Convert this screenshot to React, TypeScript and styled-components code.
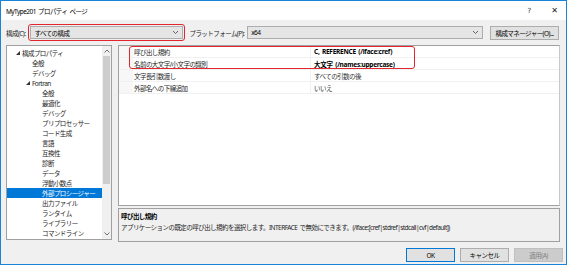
import styled, { createGlobalStyle } from "styled-components"

const GlobalStyle = createGlobalStyle`
    html, body {
        margin: 0;
        padding: 0;
        background: #f0f0f0;
    }
    * {
        box-sizing: border-box;
    }
`

const treeItems = [
    { label: "構成プロパティ", level: 0, open: true },
    { label: "全般", level: 1 },
    { label: "デバッグ", level: 1 },
    { label: "Fortran", level: 1, open: true },
    { label: "全般", level: 2 },
    { label: "最適化", level: 2 },
    { label: "デバッグ", level: 2 },
    { label: "プリプロセッサー", level: 2 },
    { label: "コード生成", level: 2 },
    { label: "言語", level: 2 },
    { label: "互換性", level: 2 },
    { label: "診断", level: 2 },
    { label: "データ", level: 2 },
    { label: "浮動小数点", level: 2 },
    { label: "外部プロシージャー", level: 2, selected: true },
    { label: "出力ファイル", level: 2 },
    { label: "ランタイム", level: 2 },
    { label: "ライブラリー", level: 2 },
    { label: "コマンドライン", level: 2 },
]

const props = [
    { name: "呼び出し規約", value: "C, REFERENCE (/iface:cref)", bold: true },
    { name: "名前の大文字/小文字の識別", value: "大文字 (/names:uppercase)", bold: true },
    { name: "文字長引数渡し", value: "すべての引数の後" },
    { name: "外部名への下線追加", value: "いいえ" },
]

const Chevron = () => (
    <svg width="7" height="5" viewBox="0 0 7 5">
        <polyline points="1,1 3.5,3.5 6,1" fill="none" stroke="#555" strokeWidth="0.9" />
    </svg>
)

const Expander = () => (
    <svg width="4" height="4" viewBox="0 0 4 4">
        <polygon points="4,0 4,4 0,4" fill="#333" />
    </svg>
)

const App = () => {

    return (

        <Window>

            <GlobalStyle />

            <TitleBar>

                <Title>MyType201 プロパティ ページ</Title>

                <TitleButtons>

                    <TitleGlyph>?</TitleGlyph>

                    <TitleGlyph $big>✕</TitleGlyph>

                </TitleButtons>

            </TitleBar>

            <Toolbar>

                <Label>構成(C):</Label>

                <Highlight>

                    <Select $width={153}>

                        <span>すべての構成</span>

                        <Chevron />

                    </Select>

                </Highlight>

                <Label $left={4}>プラットフォーム(P):</Label>

                <Select $width={236}>

                    <span>x64</span>

                    <Chevron />

                </Select>

                <Button $width={69}>構成マネージャー(O)...</Button>

            </Toolbar>

            <Main>

                <Tree>

                    <TreeList>

                        {treeItems.map((item, i) => (

                            <TreeRow key={i} $level={item.level} $selected={!!item.selected}>

                                <ExpanderSlot>{item.open && <Expander />}</ExpanderSlot>

                                {item.label}

                            </TreeRow>

                        ))}

                    </TreeList>

                    <ScrollBar>

                        <ScrollArrow>

                            <svg width="6" height="4" viewBox="0 0 6 4">
                                <polyline points="0.5,3.5 3,1 5.5,3.5" fill="none" stroke="#606060" strokeWidth="0.9" />
                            </svg>

                        </ScrollArrow>

                        <ScrollTrack>

                            <Thumb />

                        </ScrollTrack>

                        <ScrollArrow>

                            <svg width="6" height="4" viewBox="0 0 6 4">
                                <polyline points="0.5,0.5 3,3 5.5,0.5" fill="none" stroke="#606060" strokeWidth="0.9" />
                            </svg>

                        </ScrollArrow>

                    </ScrollBar>

                </Tree>

                <RightColumn>

                    <Grid>

                        {props.map((p, i) => (

                            <GridRow key={i}>

                                <Gutter />

                                <NameCell>{p.name}</NameCell>

                                <ValueCell $bold={!!p.bold}>{p.value}</ValueCell>

                            </GridRow>

                        ))}

                        <RowHighlight />

                    </Grid>

                    <Description>

                        <DescTitle>呼び出し規約</DescTitle>

                        <DescText>アプリケーションの既定の呼び出し規約を選択します。INTERFACE で無効にできます。(/iface:[cref|stdref|stdcall|cvf|default])</DescText>

                    </Description>

                </RightColumn>

            </Main>

            <Footer>

                <Button $width={49} $default>OK</Button>

                <Button $width={49}>キャンセル</Button>

                <Button $width={49} $disabled>適用(A)</Button>

            </Footer>

        </Window>

    )

}

const Window = styled.div`
    width: 567px;
    height: 265px;
    border: 1px solid #1883d7;
    background: #f0f0f0;
    display: flex;
    flex-direction: column;
    font-family: "Noto Sans", "Noto Sans CJK JP", sans-serif;
    font-size: 6.5px;
    letter-spacing: -0.55px;
    word-spacing: 1px;
    color: #000;
    overflow: hidden;
`

const TitleBar = styled.div`
    height: 19px;
    background: #fff;
    display: flex;
    align-items: center;
    justify-content: space-between;
    padding: 0 8px 0 5px;
`

const Title = styled.div`
    font-size: 6.5px;
`

const TitleButtons = styled.div`
    display: flex;
    align-items: center;
    gap: 20px;
`

const TitleGlyph = styled.span<{ $big?: boolean }>`
    font-family: "DejaVu Sans", sans-serif;
    font-size: ${p => (p.$big ? "8px" : "7px")};
    letter-spacing: 0;
    color: #222;
`

const Toolbar = styled.div`
    height: 17px;
    margin-top: 4px;
    display: flex;
    align-items: center;
    padding: 0 7px 0 5px;
`

const Label = styled.span<{ $left?: number }>`
    margin-left: ${p => p.$left || 0}px;
    margin-right: 3px;
    white-space: nowrap;
    color: #222;
`

const Highlight = styled.div`
    border: 1.5px solid #e2262d;
    border-radius: 3px;
    padding: 1px;
`

const Select = styled.div<{ $width: number }>`
    width: ${p => p.$width}px;
    height: 13px;
    background: #e5e5e5;
    border: 1px solid #adadad;
    display: flex;
    align-items: center;
    justify-content: space-between;
    padding: 0 3px 0 3px;
`

const Button = styled.div<{ $width: number; $default?: boolean; $disabled?: boolean }>`
    width: ${p => p.$width}px;
    height: 14px;
    margin-left: auto;
    background: ${p => (p.$disabled ? "#cccccc" : "#e1e1e1")};
    border: 1px solid ${p => (p.$default ? "#0078d7" : p.$disabled ? "#bfbfbf" : "#adadad")};
    color: ${p => (p.$disabled ? "#838383" : "#000")};
    display: flex;
    align-items: center;
    justify-content: center;
    white-space: nowrap;
`

const Main = styled.div`
    display: flex;
    gap: 6px;
    margin-top: 4px;
    padding: 0 6px 0 5px;
`

const Tree = styled.div`
    width: 106px;
    height: 195px;
    background: #fff;
    border: 1px solid #a0a0a0;
    display: flex;
`

const TreeList = styled.div`
    flex: 1;
    padding-top: 2px;
`

const TreeRow = styled.div<{ $level: number; $selected: boolean }>`
    height: 10px;
    display: flex;
    align-items: center;
    padding-left: ${p => 9 + p.$level * 10}px;
    background: ${p => (p.$selected ? "#0078d7" : "transparent")};
    color: ${p => (p.$selected ? "#fff" : "#1e1e1e")};
    white-space: nowrap;
`

const ExpanderSlot = styled.span`
    width: 6px;
    display: flex;
    align-items: center;
`

const ScrollBar = styled.div`
    width: 9px;
    background: #f0f0f0;
    display: flex;
    flex-direction: column;
`

const ScrollArrow = styled.div`
    height: 10px;
    display: flex;
    align-items: center;
    justify-content: center;
`

const ScrollTrack = styled.div`
    flex: 1;
    display: flex;
    flex-direction: column;
`

const Thumb = styled.div`
    height: 128px;
    margin: 0 1px;
    background: #cdcdcd;
`

const RightColumn = styled.div`
    flex: 1;
    display: flex;
    flex-direction: column;
    gap: 2px;
`

const Grid = styled.div`
    position: relative;
    height: 161px;
    background: #fff;
    border: 1px solid #a0a0a0;
    border-right-color: #c8c8c8;
`

const GridRow = styled.div`
    height: 12px;
    display: flex;
    align-items: center;
    border-bottom: 1px solid #f0f0f0;
`

const Gutter = styled.div`
    width: 14px;
    align-self: stretch;
    background: #f7f7f7;
`

const NameCell = styled.div`
    width: 178px;
    padding-left: 1px;
    align-self: stretch;
    display: flex;
    align-items: center;
    border-right: 1px solid #f0f0f0;
    color: #1e1e1e;
    white-space: nowrap;
`

const ValueCell = styled.div<{ $bold: boolean }>`
    padding-left: 3px;
    font-weight: ${p => (p.$bold ? 700 : 400)};
    letter-spacing: ${p => (p.$bold ? "-0.25px" : "-0.55px")};
    color: ${p => (p.$bold ? "#000" : "#333")};
    white-space: nowrap;
`

const RowHighlight = styled.div`
    position: absolute;
    left: 10px;
    top: 0px;
    width: 286px;
    height: 23px;
    border: 1.5px solid #e2262d;
    border-radius: 3px;
    pointer-events: none;
`

const Description = styled.div`
    height: 34px;
    border: 1px solid #a0a0a0;
    background: #f0f0f0;
    padding: 2px 2px;
    display: flex;
    flex-direction: column;
    gap: 1px;
`

const DescTitle = styled.div`
    font-weight: 700;
`

const DescText = styled.div`
    white-space: nowrap;
    color: #1e1e1e;
`

const Footer = styled.div`
    display: flex;
    justify-content: flex-end;
    gap: 5px;
    margin-top: 6px;
    padding: 0 3px 0 0;

    & > div {
        margin-left: 0;
    }
`

export default App
